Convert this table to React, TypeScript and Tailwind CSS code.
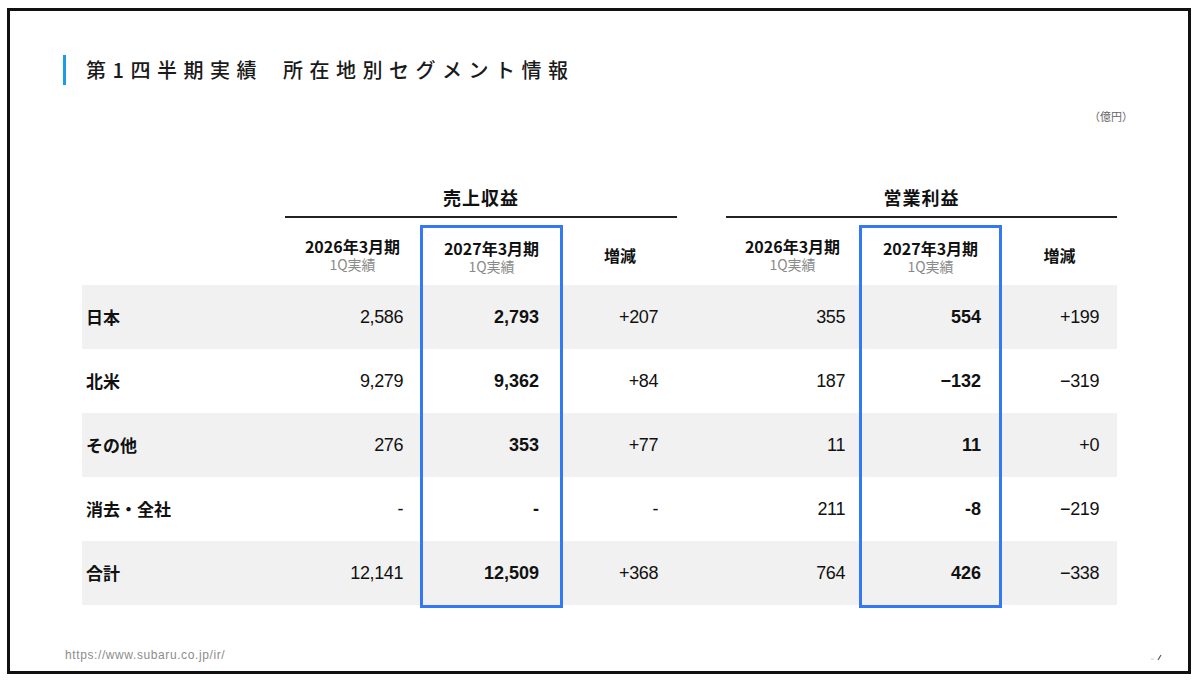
import React from 'react';

const jp = "font-['Noto_Sans_CJK_JP',sans-serif]";
const num = "font-['Liberation_Sans','Noto_Sans_CJK_JP',sans-serif]";

const labels = ['日本', '北米', 'その他', '消去・全社', '合計'];

const revenue = {
  prev: ['2,586', '9,279', '276', '-', '12,141'],
  curr: ['2,793', '9,362', '353', '-', '12,509'],
  diff: ['+207', '+84', '+77', '-', '+368'],
};

const profit = {
  prev: ['355', '187', '11', '211', '764'],
  curr: ['554', '\u2212132', '11', '-8', '426'],
  diff: ['+199', '\u2212319', '+0', '\u2212219', '\u2212338'],
};

const rowBg = (i: number) => (i % 2 === 0 ? 'bg-[#f1f1f1]' : 'bg-white');

const YearHeader = ({ year }: { year: string }) => (
  <div className="flex flex-col items-center">
    <span className={`${jp} text-[16px] font-bold text-[#111] leading-[19px]`}>{year}年3月期</span>
    <span className={`${jp} text-[14px] text-[#8a8a8a] leading-[17px]`}>1Q実績</span>
  </div>
);

const DiffHeader = () => (
  <span className={`${jp} text-[16px] font-bold text-[#111]`}>増減</span>
);

// one column of numbers; highlighted columns get the blue frame
const NumColumn = ({
  width,
  header,
  values,
  pad,
  highlight,
}: {
  width: string;
  header: React.ReactNode;
  values: string[];
  pad: string;
  highlight?: boolean;
}) => (
  <div className={`${width} flex flex-col ${highlight ? 'border-[3px] border-[#3478f6]' : ''}`}>
    <div className={`${highlight ? 'h-[57px]' : 'h-[60px]'} flex items-center justify-center bg-white`}>
      {header}
    </div>
    {values.map((v, i) => (
      <div
        key={i}
        className={`h-[64px] flex items-center justify-end ${pad} ${rowBg(i)} ${num} text-[18px] text-[#111] ${
          highlight ? 'font-bold' : 'tracking-[-0.4px]'
        }`}
      >
        {v}
      </div>
    ))}
  </div>
);

const GroupHeading = ({ title, width }: { title: string; width: string }) => (
  <div
    className={`${width} h-[40px] flex items-center justify-center border-b-2 border-[#222] mb-[7px] ${jp} text-[18px] font-bold tracking-[1px] text-[#111]`}
  >
    {title}
  </div>
);

const SpacerColumn = ({ width, children }: { width: string; children?: (i: number) => React.ReactNode }) => (
  <div className={`${width} flex flex-col`}>
    <div className="h-[47px]" />
    <div className="h-[60px]" />
    {labels.map((_, i) => (
      <div key={i} className={`h-[64px] flex items-center ${rowBg(i)}`}>
        {children ? children(i) : null}
      </div>
    ))}
  </div>
);

export default function App() {
  return (
    <div className="w-[1200px] h-[685px] bg-white overflow-hidden">
      <div className="ml-[7px] mt-[8px] w-[1184px] h-[666px] border-[3px] border-[#111] flex flex-col">
        {/* title */}
        <div className="mt-[44px] pl-[53px] flex items-center">
          <div className="w-[3px] h-[30px] bg-[#1a9de2]" />
          <div className={`ml-[20px] ${jp} text-[20px] font-medium tracking-[6.5px] text-[#1a1a1a] leading-[26px]`}>
            <span>第1四半期実績</span>
            <span className="ml-[20px]">所在地別セグメント情報</span>
          </div>
        </div>

        <div className={`mt-[24px] pr-[55px] text-right ${jp} text-[11px] leading-[15px] text-[#666]`}>（億円）</div>

        {/* table */}
        <div className="mt-[54px] ml-[72px] flex">
          <SpacerColumn width="w-[203px]">
            {(i) => (
              <span className={`pl-[4px] ${jp} text-[17px] font-bold text-[#111]`}>{labels[i]}</span>
            )}
          </SpacerColumn>

          <div className="flex flex-col">
            <GroupHeading title="売上収益" width="w-[392px]" />
            <div className="flex">
              <NumColumn width="w-[135px]" header={<YearHeader year="2026" />} values={revenue.prev} pad="pr-[17px]" />
              <NumColumn width="w-[143px]" header={<YearHeader year="2027" />} values={revenue.curr} pad="pr-[21px]" highlight />
              <NumColumn width="w-[114px]" header={<DiffHeader />} values={revenue.diff} pad="pr-[19px]" />
            </div>
          </div>

          <SpacerColumn width="w-[49px]" />

          <div className="flex flex-col">
            <GroupHeading title="営業利益" width="w-[391px]" />
            <div className="flex">
              <NumColumn width="w-[133px]" header={<YearHeader year="2026" />} values={profit.prev} pad="pr-[14px]" />
              <NumColumn width="w-[143px]" header={<YearHeader year="2027" />} values={profit.curr} pad="pr-[18px]" highlight />
              <NumColumn width="w-[115px]" header={<DiffHeader />} values={profit.diff} pad="pr-[18px]" />
            </div>
          </div>
        </div>

        {/* footer */}
        <div className="mt-auto mb-[6px] pl-[55px] flex items-end justify-between pr-[26px]">
          <span className="font-['Liberation_Sans',sans-serif] text-[12px] tracking-[0.6px] leading-[15px] text-[#8c8c8c] mb-[2px]">
            https://www.subaru.co.jp/ir/
          </span>
          <svg width="12" height="8" viewBox="0 0 12 8" className="mb-[4px]">
            <line x1="1" y1="6" x2="4" y2="6" stroke="#ccc" strokeWidth="1" />
            <line x1="8" y1="7" x2="11" y2="2" stroke="#555" strokeWidth="1.2" />
          </svg>
        </div>
      </div>
    </div>
  );
}
